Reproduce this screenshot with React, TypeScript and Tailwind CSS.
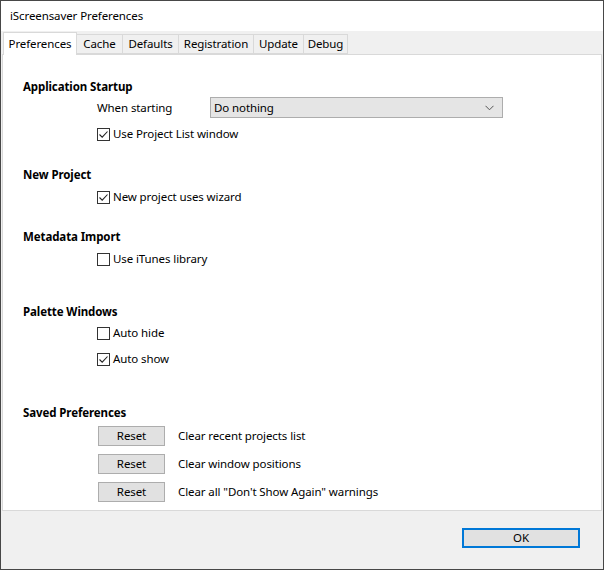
import type { ReactNode } from 'react';

const FONT = "font-['Noto_Sans','Liberation_Sans',sans-serif]";

function CheckBox({ checked, label, className = '' }: { checked?: boolean; label: string; className?: string }) {
  return (
    <div className={`flex h-4 items-center ${className}`}>
      <span className="flex h-[13px] w-[13px] items-center justify-center border border-[#333] bg-white">
        {checked && (
          <svg width="11" height="11" viewBox="0 0 11 11" fill="none">
            <path d="M1.5 5.5 L4.2 8.2 L9.5 2.5" stroke="#222" strokeWidth="1.1" />
          </svg>
        )}
      </span>
      <span className="ml-[3px]">{label}</span>
    </div>
  );
}

function Heading({ children, className = '' }: { children: ReactNode; className?: string }) {
  return <div className={`h-4 font-bold leading-4 ${className}`}>{children}</div>;
}

function ResetRow({ label, className = '' }: { label: string; className?: string }) {
  return (
    <div className={`flex h-5 items-center ${className}`}>
      <button className="ml-[1px] h-5 w-[67px] border border-[#adadad] bg-[#e1e1e1] leading-none">Reset</button>
      <span className="ml-[13px]">{label}</span>
    </div>
  );
}

const tabs: [string, string][] = [
  ['Preferences', 'w-[74px]'],
  ['Cache', 'w-[46px]'],
  ['Defaults', 'w-[56px]'],
  ['Registration', 'w-[75px]'],
  ['Update', 'w-[50px]'],
  ['Debug', 'w-[44px]'],
];

export default function App() {
  return (
    <div className={`flex h-[570px] w-[604px] flex-col border border-[#474747] bg-[#f0f0f0] text-[11.5px] tracking-[-0.1px] text-black ${FONT}`}>
      {/* title bar */}
      <div className="flex h-[30px] items-center bg-white pl-[9px]">iScreensaver Preferences</div>

      {/* tabs */}
      <div className="flex h-[23px] items-end pl-[2px]">
        {tabs.map(([t, w], i) =>
          i === 0 ? (
            <div key={t} className={`relative z-10 -mb-px flex h-[23px] items-center justify-center border border-b-0 border-[#d9d9d9] bg-white ${w}`}>
              {t}
            </div>
          ) : (
            <div key={t} className={`flex h-[20px] items-center justify-center border border-l-0 border-[#d9d9d9] ${w}`}>
              {t}
            </div>
          ),
        )}
      </div>

      {/* panel */}
      <div className="mx-[1px] flex h-[457px] flex-col border border-[#d9d9d9] bg-white pl-[20px] pt-[24px]">
        <Heading>Application Startup</Heading>
        <div className="ml-[74px] mt-[2px] flex h-[21px] items-center">
          <span className="w-[113px]">When starting</span>
          <div className="flex h-[21px] w-[293px] items-center justify-between border border-[#adadad] bg-[#e5e5e5] pl-[3px] pr-[8px]">
            <span>Do nothing</span>
            <svg width="9" height="6" viewBox="0 0 9 6" fill="none">
              <path d="M0.5 0.8 L4.5 4.8 L8.5 0.8" stroke="#555" strokeWidth="1" />
            </svg>
          </div>
        </div>
        <CheckBox checked label="Use Project List window" className="ml-[74px] mt-[8px]" />

        <Heading className="mt-[25px]">New Project</Heading>
        <CheckBox checked label="New project uses wizard" className="ml-[74px] mt-[6px]" />

        <Heading className="mt-[24px]">Metadata Import</Heading>
        <CheckBox label="Use iTunes library" className="ml-[74px] mt-[6px]" />

        <Heading className="mt-[37px]">Palette Windows</Heading>
        <CheckBox label="Auto hide" className="ml-[74px] mt-[5px]" />
        <CheckBox checked label="Auto show" className="ml-[74px] mt-[10px]" />

        <Heading className="mt-[38px]">Saved Preferences</Heading>
        <div className="ml-[74px] mt-[5px] flex flex-col gap-[8px]">
          <ResetRow label="Clear recent projects list" />
          <ResetRow label="Clear window positions" />
          <ResetRow label={'Clear all "Don\'t Show Again" warnings'} />
        </div>
      </div>

      {/* footer */}
      <div className="flex flex-1 items-start justify-end pr-[23px] pt-[17px]">
        <button className="h-[20px] w-[118px] border-2 border-[#0078d7] bg-[#e1e1e1] leading-none">OK</button>
      </div>
    </div>
  );
}
